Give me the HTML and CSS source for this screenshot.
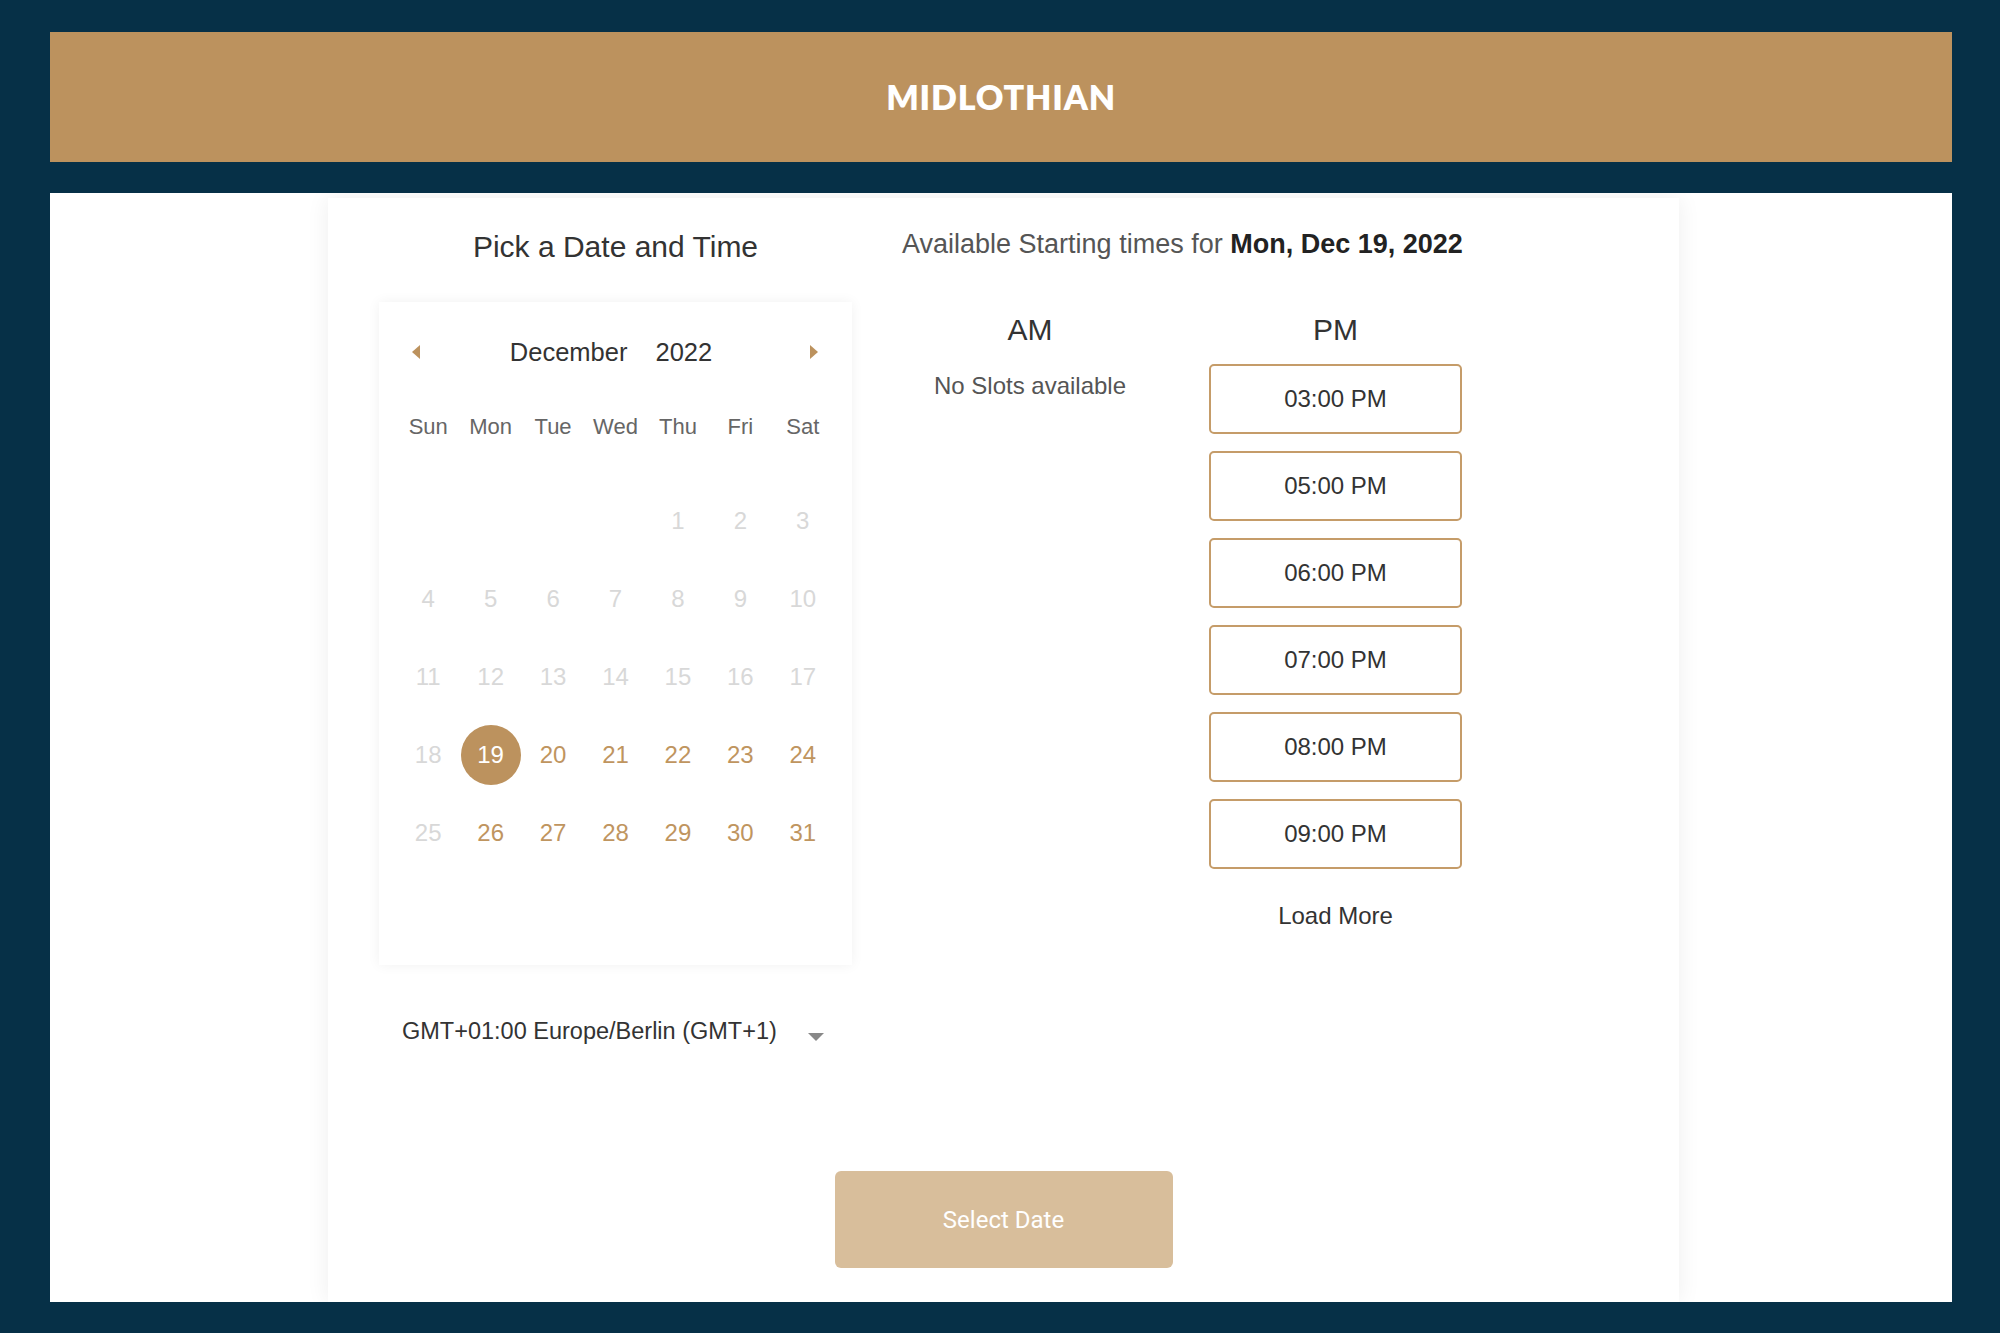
FILE: index.html
```html
<!DOCTYPE html>
<html lang="en">
<head>
<meta charset="utf-8">
<title>Midlothian - Pick a Date and Time</title>
<link rel="stylesheet" href="styles.css">
</head>
<body>
<div class="page">
  <header class="brand"><h1 class="brand-name">MIDLOTHIAN</h1></header>
  <main class="panel">
    <section class="card">
      <div class="cols">
        <div class="date-col">
          <h2 class="title">Pick a Date and Time</h2>
          <div class="calendar">
            <div class="cal-head">
              <span class="arrow arrow-left"></span>
              <div class="month"><span>December</span><span>2022</span></div>
              <span class="arrow arrow-right"></span>
            </div>
            <div class="weekdays">
              <span>Sun</span><span>Mon</span><span>Tue</span><span>Wed</span><span>Thu</span><span>Fri</span><span>Sat</span>
            </div>
            <div class="days">
              <span class="day"></span><span class="day"></span><span class="day"></span><span class="day"></span>
              <span class="day off">1</span><span class="day off">2</span><span class="day off">3</span>
              <span class="day off">4</span><span class="day off">5</span><span class="day off">6</span><span class="day off">7</span><span class="day off">8</span><span class="day off">9</span><span class="day off">10</span>
              <span class="day off">11</span><span class="day off">12</span><span class="day off">13</span><span class="day off">14</span><span class="day off">15</span><span class="day off">16</span><span class="day off">17</span>
              <span class="day off">18</span><span class="day"><span class="sel">19</span></span><span class="day">20</span><span class="day">21</span><span class="day">22</span><span class="day">23</span><span class="day">24</span>
              <span class="day off">25</span><span class="day">26</span><span class="day">27</span><span class="day">28</span><span class="day">29</span><span class="day">30</span><span class="day">31</span>
            </div>
          </div>
          <div class="tz"><span>GMT+01:00 Europe/Berlin (GMT+1)</span><span class="caret"></span></div>
        </div>
        <div class="time-col">
          <p class="avail">Available Starting times for <b>Mon, Dec 19, 2022</b></p>
          <div class="slots">
            <div class="half">
              <h3 class="half-title">AM</h3>
              <p class="none">No Slots available</p>
            </div>
            <div class="half">
              <h3 class="half-title">PM</h3>
              <div class="slot-list">
                <button class="slot">03:00 PM</button>
                <button class="slot">05:00 PM</button>
                <button class="slot">06:00 PM</button>
                <button class="slot">07:00 PM</button>
                <button class="slot">08:00 PM</button>
                <button class="slot">09:00 PM</button>
              </div>
              <p class="more">Load More</p>
            </div>
          </div>
        </div>
      </div>
      <button class="select">Select Date</button>
    </section>
  </main>
</div>
</body>
</html>
```
FILE: styles.css
```css
body {
  margin: 0;
  background: #063047;
  font-family: "Liberation Sans", Arial, sans-serif;
}

.page {
  width: 2000px;
  height: 1333px;
  box-sizing: border-box;
  padding: 32px 48px 0 50px;
}

.brand {
  height: 130px;
  background: #bc925e;
  display: flex;
  align-items: center;
  justify-content: center;
}

.brand-name {
  margin: 0;
  font-family: Lato, "Open Sans", sans-serif;
  font-weight: 800;
  font-size: 34px;
  letter-spacing: 0.8px;
  color: #fff;
  line-height: 1;
}

.panel {
  margin-top: 31px;
  height: 1109px;
  box-sizing: border-box;
  padding: 5px 0 0 5px;
  background: #fff;
  display: flex;
  justify-content: center;
  align-items: flex-start;
  overflow: hidden;
}

.card {
  width: 1351px;
  box-sizing: border-box;
  padding: 31px 0 34px;
  box-shadow: 0 0 22px rgba(0, 0, 0, 0.07);
  display: flex;
  flex-direction: column;
  align-items: center;
}

.cols {
  align-self: stretch;
  display: flex;
  align-items: flex-start;
  gap: 50px;
  padding-left: 51px;
}

.date-col {
  width: 473px;
}

.title {
  margin: 0;
  font-size: 30px;
  line-height: 36px;
  font-weight: 400;
  color: #333;
  text-align: center;
}

.calendar {
  margin-top: 37px;
  height: 663px;
  box-sizing: border-box;
  padding: 0 18px;
  box-shadow: 0 0 12px rgba(0, 0, 0, 0.06);
}

.cal-head {
  height: 100px;
  display: flex;
  align-items: center;
  justify-content: space-between;
  padding: 0 16px 0 15px;
}

.arrow {
  width: 0;
  height: 0;
  border-top: 7px solid transparent;
  border-bottom: 7px solid transparent;
}

.arrow-left {
  border-right: 8px solid #bc925e;
}

.arrow-right {
  border-left: 8px solid #bc925e;
}

.month {
  display: flex;
  gap: 28px;
  margin-right: 8px;
  font-size: 25.5px;
  color: #333;
}

.weekdays {
  height: 50px;
  display: grid;
  grid-template-columns: repeat(7, 1fr);
  align-items: center;
  text-align: center;
  font-size: 22px;
  color: #666;
}

.days {
  margin-top: 30px;
  display: grid;
  grid-template-columns: repeat(7, 1fr);
  grid-template-rows: repeat(6, 78px);
}

.day {
  display: flex;
  align-items: center;
  justify-content: center;
  font-size: 24px;
  color: #bf955f;
}

.day.off {
  color: #d8d8d8;
}

.sel {
  width: 60px;
  height: 60px;
  border-radius: 50%;
  background: #bc925e;
  color: #fff;
  display: flex;
  align-items: center;
  justify-content: center;
}

.tz {
  margin-top: 46px;
  height: 40px;
  display: flex;
  align-items: center;
  justify-content: space-between;
  padding: 0 28px 0 23px;
  font-size: 23.5px;
  color: #333;
}

.caret {
  width: 0;
  height: 0;
  border-left: 8px solid transparent;
  border-right: 8px solid transparent;
  border-top: 8px solid #888;
  margin-top: 12px;
}

.time-col {
  width: 560px;
}

.avail {
  margin: 0;
  font-size: 27px;
  line-height: 30px;
  color: #555;
  text-align: center;
  white-space: nowrap;
}

.avail b {
  color: #222;
}

.slots {
  margin-top: 53px;
  display: grid;
  grid-template-columns: 256px 253px;
  column-gap: 51px;
}

.half-title {
  margin: 0;
  font-size: 30px;
  line-height: 36px;
  font-weight: 400;
  color: #333;
  text-align: center;
}

.none {
  margin: 23px 0 0;
  font-size: 24px;
  line-height: 30px;
  color: #555;
  text-align: center;
}

.slot-list {
  margin-top: 16px;
  display: flex;
  flex-direction: column;
  gap: 17px;
}

.slot {
  height: 70px;
  border: 2px solid #c59c69;
  border-radius: 5px;
  background: #fff;
  font-family: "Liberation Sans", Arial, sans-serif;
  font-size: 24px;
  color: #333;
  padding: 0;
}

.more {
  margin: 32px 0 0;
  font-size: 24px;
  line-height: 30px;
  color: #333;
  text-align: center;
}

.select {
  margin-top: 120px;
  width: 338px;
  height: 97px;
  border: 0;
  border-radius: 6px;
  background: #d8be9b;
  color: #fff;
  font-family: Roboto, "Liberation Sans", sans-serif;
  font-size: 24px;
  padding: 0;
}
```
